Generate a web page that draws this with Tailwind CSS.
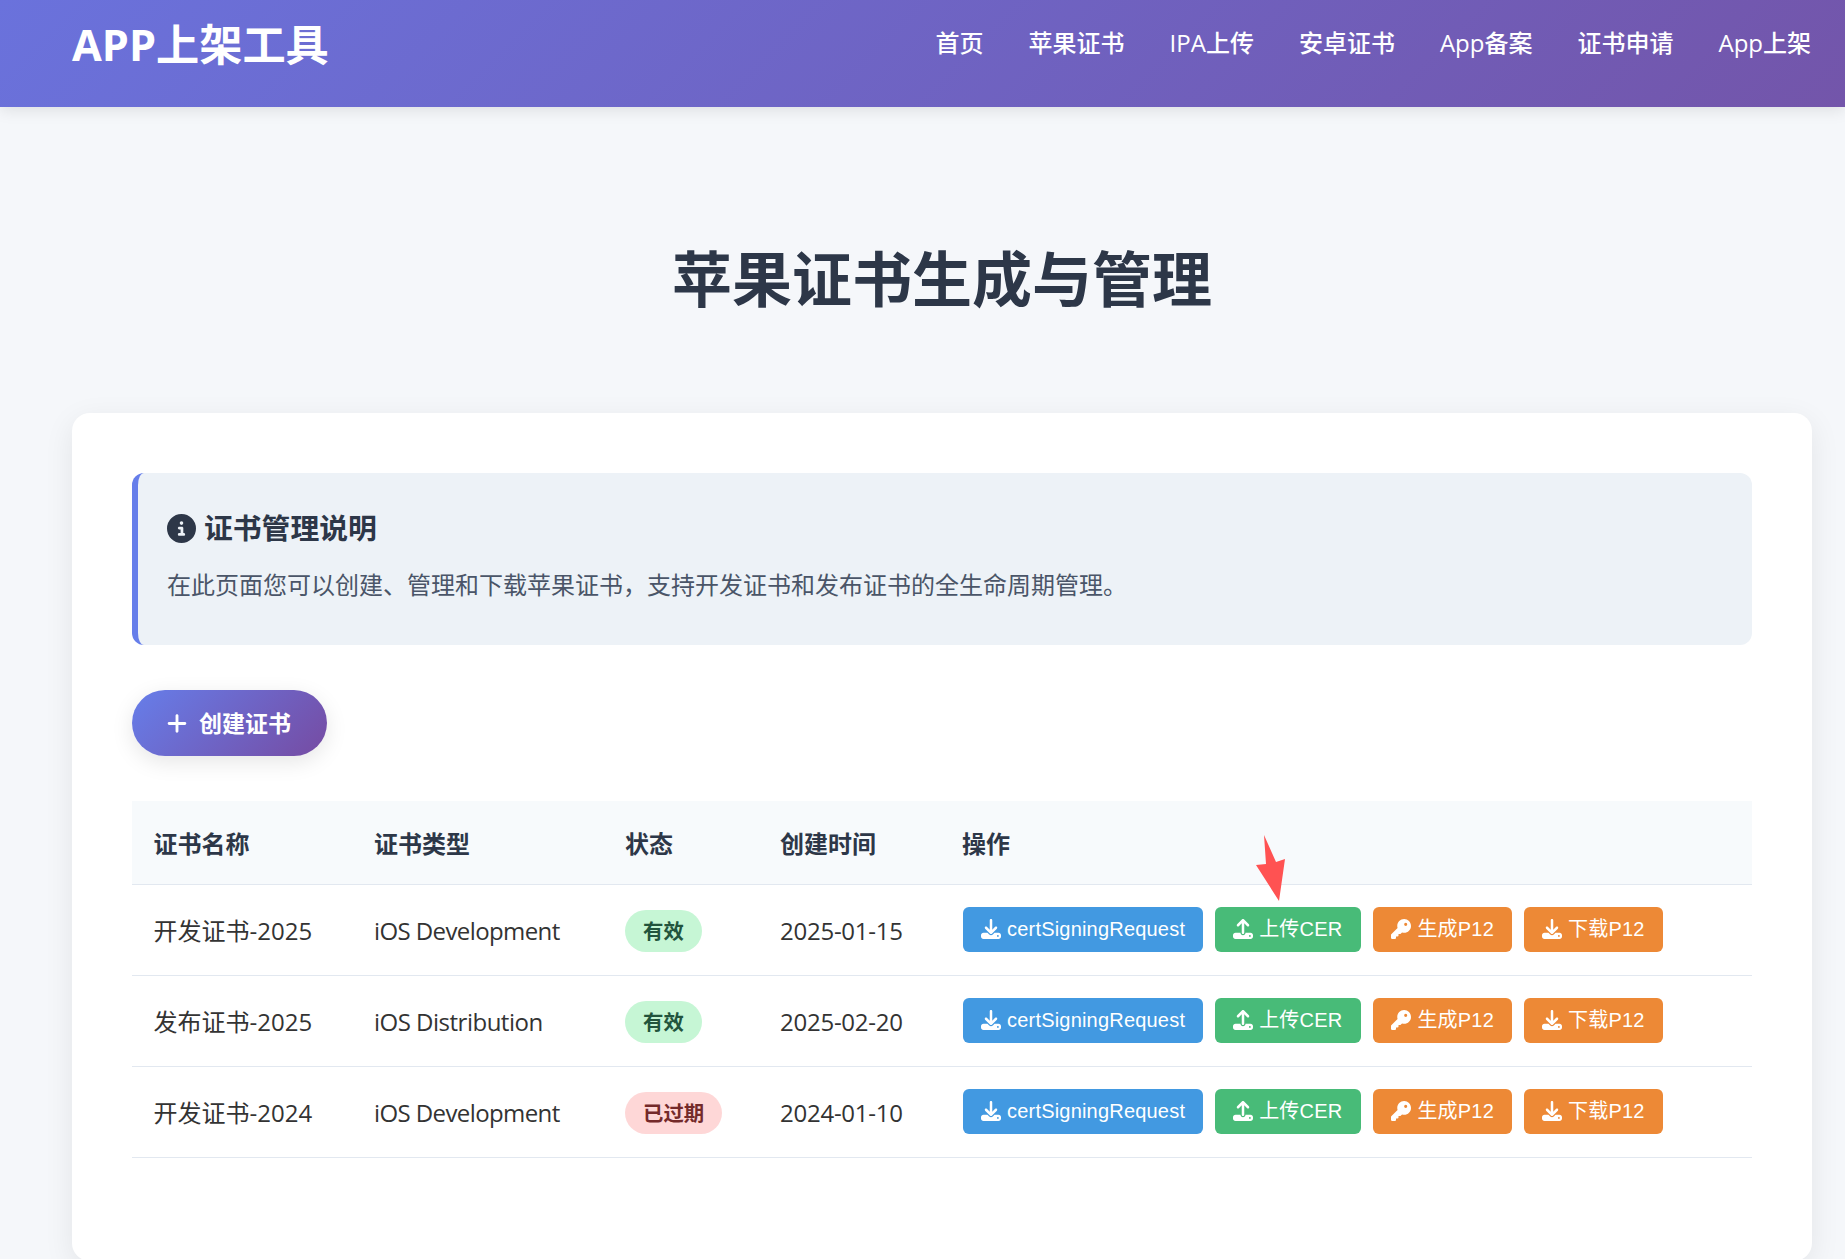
<!DOCTYPE html>
<html lang="zh-CN">
<head>
<meta charset="utf-8">
<title>苹果证书生成与管理</title>
<script src="https://cdn.jsdelivr.net/npm/@tailwindcss/browser@4"></script>
</head>
<body class="h-screen overflow-hidden bg-[#f5f7fa] text-[#333333] font-['Open_Sans','Noto_Sans_CJK_SC',sans-serif]">
<header class="h-[107px] pl-[72px] pr-[33px] bg-[linear-gradient(135deg,#6a72dc,#7355aa)] shadow-[0_3px_15px_rgba(0,0,0,0.1)] text-white relative">
  <div class="h-[86px] flex items-center justify-between">
    <a class="mt-[4px] text-[43.2px] font-bold">APP上架工具</a>
    <nav class="flex gap-[45px] mr-[1px] text-[24px] font-medium">
      <a>首页</a><a>苹果证书</a><a>IPA上传</a><a>安卓证书</a><a>App备案</a><a>证书申请</a><a>App上架</a>
    </nav>
  </div>
</header>
<main class="pl-[72px] pr-[33px]">
  <h1 class="mt-[127px] mb-[89px] h-[90px] leading-[90px] text-center text-[60px] font-bold text-[#2d3748]">苹果证书生成与管理</h1>
  <section class="relative h-[848px] p-[60px] bg-white rounded-[18px] shadow-[0_8px_30px_rgba(0,0,0,0.08)]">
    <div class="h-[172px] pl-[29px] pt-[31px] bg-[#edf2f7] border-l-[6px] border-[#667eea] rounded-[12px]">
      <h3 class="h-[48px] flex items-center gap-[8px] text-[28.8px] font-bold text-[#2d3748]">
        <svg class="w-[29px] h-[29px]" viewBox="0 0 512 512" fill="currentColor"><path d="M256 512A256 256 0 1 0 256 0a256 256 0 1 0 0 512zM216 336h24V272H216c-13.3 0-24-10.7-24-24s10.7-24 24-24h48c13.3 0 24 10.7 24 24v88h8c13.3 0 24 10.7 24 24s-10.7 24-24 24H216c-13.3 0-24-10.7-24-24s10.7-24 24-24zm40-208a32 32 0 1 1 0 64 32 32 0 1 1 0-64z"/></svg>
        证书管理说明
      </h3>
      <p class="mt-[13px] text-[24px] leading-[40px] text-[#4a5568]">在此页面您可以创建、管理和下载苹果证书，支持开发证书和发布证书的全生命周期管理。</p>
    </div>
    <button class="mt-[45px] h-[66px] w-[195px] pl-[35px] flex items-center gap-[12px] rounded-full text-white text-[23px] font-bold bg-[linear-gradient(135deg,#667eea,#764ba2)] shadow-[0_6px_22px_rgba(0,0,0,0.1)]">
      <svg class="w-[20px] h-[23px]" viewBox="0 0 448 512" fill="currentColor"><path d="M256 80c0-17.7-14.3-32-32-32s-32 14.3-32 32V224H48c-17.7 0-32 14.3-32 32s14.3 32 32 32H192V432c0 17.7 14.3 32 32 32s32-14.3 32-32V288H400c17.7 0 32-14.3 32-32s-14.3-32-32-32H256V80z"/></svg>
      创建证书
    </button>
    <table class="mt-[45px] w-full table-fixed border-separate border-spacing-0 text-left text-[24px]">
      <colgroup>
        <col class="w-[220.5px]"><col class="w-[250px]"><col class="w-[156px]"><col class="w-[182px]"><col>
      </colgroup>
      <thead>
        <tr class="h-[84px] bg-[#f7fafc] text-[#2d3748]">
          <th class="pl-[21.5px] pt-[2px] border-b border-[#e2e8f0]">证书名称</th>
          <th class="pl-[21.5px] pt-[2px] border-b border-[#e2e8f0]">证书类型</th>
          <th class="pl-[22.5px] pt-[2px] border-b border-[#e2e8f0]">状态</th>
          <th class="pl-[21.5px] pt-[2px] border-b border-[#e2e8f0]">创建时间</th>
          <th class="pl-[21.5px] pt-[2px] border-b border-[#e2e8f0]">操作</th>
        </tr>
      </thead>
      <tbody>
        <tr class="h-[91px]">
          <td class="pl-[21.5px] pt-[2px] border-b border-[#e2e8f0]">开发证书-2025</td>
          <td class="pl-[21.5px] pt-[2px] border-b border-[#e2e8f0] tracking-[-0.6px]">iOS Development</td>
          <td class="pl-[22.5px] pt-[2px] border-b border-[#e2e8f0]"><span class="inline-flex items-center h-[42px] px-[18px] rounded-full bg-[#c6f6d5] text-[#22543d] text-[20.4px] font-bold">有效</span></td>
          <td class="pl-[21.5px] pt-[2px] border-b border-[#e2e8f0] tracking-[-0.25px]">2025-01-15</td>
          <td class="pl-[22.5px] border-b border-[#e2e8f0]">
            <div class="flex gap-[12px] -mt-[2px] text-white text-[20px] tracking-[0.2px] font-['Liberation_Sans','Noto_Sans_CJK_SC',sans-serif]">
              <a class="h-[45px] px-[18px] flex items-center gap-[6px] rounded-[6px] bg-[#4299e1]"><svg class="w-[20px] h-[20px]" viewBox="0 0 512 512" fill="currentColor"><path d="M288 32c0-17.7-14.3-32-32-32s-32 14.3-32 32V274.7l-73.4-73.4c-12.5-12.5-32.8-12.5-45.3 0s-12.5 32.8 0 45.3l128 128c12.5 12.5 32.8 12.5 45.3 0l128-128c12.5-12.5 12.5-32.8 0-45.3s-32.8-12.5-45.3 0L288 274.7V32zM64 352c-35.3 0-64 28.7-64 64v32c0 35.3 28.7 64 64 64H448c35.3 0 64-28.7 64-64V416c0-35.3-28.7-64-64-64H346.5l-45.3 45.3c-25 25-65.5 25-90.5 0L165.5 352H64zm368 56a24 24 0 1 1 0 48 24 24 0 1 1 0-48z"/></svg>certSigningRequest</a>
              <a class="h-[45px] pl-[18px] pr-[19px] flex items-center gap-[6px] rounded-[6px] bg-[#48bb78]"><svg class="w-[20px] h-[20px]" viewBox="0 0 512 512" fill="currentColor"><path d="M288 109.3V352c0 17.7-14.3 32-32 32s-32-14.3-32-32V109.3l-73.4 73.4c-12.5 12.5-32.8 12.5-45.3 0s-12.5-32.8 0-45.3l128-128c12.5-12.5 32.8-12.5 45.3 0l128 128c12.5 12.5 12.5 32.8 0 45.3s-32.8 12.5-45.3 0L288 109.3zM64 352H192c0 35.3 28.7 64 64 64s64-28.7 64-64H448c35.3 0 64 28.7 64 64v32c0 35.3-28.7 64-64 64H64c-35.3 0-64-28.7-64-64V416c0-35.3 28.7-64 64-64zM432 456a24 24 0 1 0 0-48 24 24 0 1 0 0 48z"/></svg>上传CER</a>
              <a class="h-[45px] px-[18px] flex items-center gap-[6px] rounded-[6px] bg-[#ed8936]"><svg class="w-[20px] h-[20px]" viewBox="0 0 512 512" fill="currentColor"><path d="M336 352c97.2 0 176-78.8 176-176S433.2 0 336 0S160 78.8 160 176c0 18.7 2.9 36.8 8.3 53.7L7 391c-4.5 4.5-7 10.6-7 17v80c0 13.3 10.7 24 24 24h80c13.3 0 24-10.7 24-24V448h40c13.3 0 24-10.7 24-24V384h40c6.4 0 12.5-2.5 17-7l33.3-33.3c16.9 5.4 35 8.3 53.7 8.3zM376 96a40 40 0 1 1 0 80 40 40 0 1 1 0-80z"/></svg>生成P12</a>
              <a class="h-[45px] px-[18px] flex items-center gap-[6px] rounded-[6px] bg-[#ed8936]"><svg class="w-[20px] h-[20px]" viewBox="0 0 512 512" fill="currentColor"><path d="M288 32c0-17.7-14.3-32-32-32s-32 14.3-32 32V274.7l-73.4-73.4c-12.5-12.5-32.8-12.5-45.3 0s-12.5 32.8 0 45.3l128 128c12.5 12.5 32.8 12.5 45.3 0l128-128c12.5-12.5 12.5-32.8 0-45.3s-32.8-12.5-45.3 0L288 274.7V32zM64 352c-35.3 0-64 28.7-64 64v32c0 35.3 28.7 64 64 64H448c35.3 0 64-28.7 64-64V416c0-35.3-28.7-64-64-64H346.5l-45.3 45.3c-25 25-65.5 25-90.5 0L165.5 352H64zm368 56a24 24 0 1 1 0 48 24 24 0 1 1 0-48z"/></svg>下载P12</a>
            </div>
          </td>
        </tr>
        <tr class="h-[91px]">
          <td class="pl-[21.5px] pt-[2px] border-b border-[#e2e8f0]">发布证书-2025</td>
          <td class="pl-[21.5px] pt-[2px] border-b border-[#e2e8f0] tracking-[-0.5px]">iOS Distribution</td>
          <td class="pl-[22.5px] pt-[2px] border-b border-[#e2e8f0]"><span class="inline-flex items-center h-[42px] px-[18px] rounded-full bg-[#c6f6d5] text-[#22543d] text-[20.4px] font-bold">有效</span></td>
          <td class="pl-[21.5px] pt-[2px] border-b border-[#e2e8f0] tracking-[-0.25px]">2025-02-20</td>
          <td class="pl-[22.5px] border-b border-[#e2e8f0]">
            <div class="flex gap-[12px] -mt-[2px] text-white text-[20px] tracking-[0.2px] font-['Liberation_Sans','Noto_Sans_CJK_SC',sans-serif]">
              <a class="h-[45px] px-[18px] flex items-center gap-[6px] rounded-[6px] bg-[#4299e1]"><svg class="w-[20px] h-[20px]" viewBox="0 0 512 512" fill="currentColor"><path d="M288 32c0-17.7-14.3-32-32-32s-32 14.3-32 32V274.7l-73.4-73.4c-12.5-12.5-32.8-12.5-45.3 0s-12.5 32.8 0 45.3l128 128c12.5 12.5 32.8 12.5 45.3 0l128-128c12.5-12.5 12.5-32.8 0-45.3s-32.8-12.5-45.3 0L288 274.7V32zM64 352c-35.3 0-64 28.7-64 64v32c0 35.3 28.7 64 64 64H448c35.3 0 64-28.7 64-64V416c0-35.3-28.7-64-64-64H346.5l-45.3 45.3c-25 25-65.5 25-90.5 0L165.5 352H64zm368 56a24 24 0 1 1 0 48 24 24 0 1 1 0-48z"/></svg>certSigningRequest</a>
              <a class="h-[45px] pl-[18px] pr-[19px] flex items-center gap-[6px] rounded-[6px] bg-[#48bb78]"><svg class="w-[20px] h-[20px]" viewBox="0 0 512 512" fill="currentColor"><path d="M288 109.3V352c0 17.7-14.3 32-32 32s-32-14.3-32-32V109.3l-73.4 73.4c-12.5 12.5-32.8 12.5-45.3 0s-12.5-32.8 0-45.3l128-128c12.5-12.5 32.8-12.5 45.3 0l128 128c12.5 12.5 12.5 32.8 0 45.3s-32.8 12.5-45.3 0L288 109.3zM64 352H192c0 35.3 28.7 64 64 64s64-28.7 64-64H448c35.3 0 64 28.7 64 64v32c0 35.3-28.7 64-64 64H64c-35.3 0-64-28.7-64-64V416c0-35.3 28.7-64 64-64zM432 456a24 24 0 1 0 0-48 24 24 0 1 0 0 48z"/></svg>上传CER</a>
              <a class="h-[45px] px-[18px] flex items-center gap-[6px] rounded-[6px] bg-[#ed8936]"><svg class="w-[20px] h-[20px]" viewBox="0 0 512 512" fill="currentColor"><path d="M336 352c97.2 0 176-78.8 176-176S433.2 0 336 0S160 78.8 160 176c0 18.7 2.9 36.8 8.3 53.7L7 391c-4.5 4.5-7 10.6-7 17v80c0 13.3 10.7 24 24 24h80c13.3 0 24-10.7 24-24V448h40c13.3 0 24-10.7 24-24V384h40c6.4 0 12.5-2.5 17-7l33.3-33.3c16.9 5.4 35 8.3 53.7 8.3zM376 96a40 40 0 1 1 0 80 40 40 0 1 1 0-80z"/></svg>生成P12</a>
              <a class="h-[45px] px-[18px] flex items-center gap-[6px] rounded-[6px] bg-[#ed8936]"><svg class="w-[20px] h-[20px]" viewBox="0 0 512 512" fill="currentColor"><path d="M288 32c0-17.7-14.3-32-32-32s-32 14.3-32 32V274.7l-73.4-73.4c-12.5-12.5-32.8-12.5-45.3 0s-12.5 32.8 0 45.3l128 128c12.5 12.5 32.8 12.5 45.3 0l128-128c12.5-12.5 12.5-32.8 0-45.3s-32.8-12.5-45.3 0L288 274.7V32zM64 352c-35.3 0-64 28.7-64 64v32c0 35.3 28.7 64 64 64H448c35.3 0 64-28.7 64-64V416c0-35.3-28.7-64-64-64H346.5l-45.3 45.3c-25 25-65.5 25-90.5 0L165.5 352H64zm368 56a24 24 0 1 1 0 48 24 24 0 1 1 0-48z"/></svg>下载P12</a>
            </div>
          </td>
        </tr>
        <tr class="h-[91px]">
          <td class="pl-[21.5px] pt-[2px] border-b border-[#e2e8f0]">开发证书-2024</td>
          <td class="pl-[21.5px] pt-[2px] border-b border-[#e2e8f0] tracking-[-0.6px]">iOS Development</td>
          <td class="pl-[22.5px] pt-[2px] border-b border-[#e2e8f0]"><span class="inline-flex items-center h-[42px] px-[18px] rounded-full bg-[#fed7d7] text-[#742a2a] text-[20.4px] font-bold">已过期</span></td>
          <td class="pl-[21.5px] pt-[2px] border-b border-[#e2e8f0] tracking-[-0.25px]">2024-01-10</td>
          <td class="pl-[22.5px] border-b border-[#e2e8f0]">
            <div class="flex gap-[12px] -mt-[2px] text-white text-[20px] tracking-[0.2px] font-['Liberation_Sans','Noto_Sans_CJK_SC',sans-serif]">
              <a class="h-[45px] px-[18px] flex items-center gap-[6px] rounded-[6px] bg-[#4299e1]"><svg class="w-[20px] h-[20px]" viewBox="0 0 512 512" fill="currentColor"><path d="M288 32c0-17.7-14.3-32-32-32s-32 14.3-32 32V274.7l-73.4-73.4c-12.5-12.5-32.8-12.5-45.3 0s-12.5 32.8 0 45.3l128 128c12.5 12.5 32.8 12.5 45.3 0l128-128c12.5-12.5 12.5-32.8 0-45.3s-32.8-12.5-45.3 0L288 274.7V32zM64 352c-35.3 0-64 28.7-64 64v32c0 35.3 28.7 64 64 64H448c35.3 0 64-28.7 64-64V416c0-35.3-28.7-64-64-64H346.5l-45.3 45.3c-25 25-65.5 25-90.5 0L165.5 352H64zm368 56a24 24 0 1 1 0 48 24 24 0 1 1 0-48z"/></svg>certSigningRequest</a>
              <a class="h-[45px] pl-[18px] pr-[19px] flex items-center gap-[6px] rounded-[6px] bg-[#48bb78]"><svg class="w-[20px] h-[20px]" viewBox="0 0 512 512" fill="currentColor"><path d="M288 109.3V352c0 17.7-14.3 32-32 32s-32-14.3-32-32V109.3l-73.4 73.4c-12.5 12.5-32.8 12.5-45.3 0s-12.5-32.8 0-45.3l128-128c12.5-12.5 32.8-12.5 45.3 0l128 128c12.5 12.5 12.5 32.8 0 45.3s-32.8 12.5-45.3 0L288 109.3zM64 352H192c0 35.3 28.7 64 64 64s64-28.7 64-64H448c35.3 0 64 28.7 64 64v32c0 35.3-28.7 64-64 64H64c-35.3 0-64-28.7-64-64V416c0-35.3 28.7-64 64-64zM432 456a24 24 0 1 0 0-48 24 24 0 1 0 0 48z"/></svg>上传CER</a>
              <a class="h-[45px] px-[18px] flex items-center gap-[6px] rounded-[6px] bg-[#ed8936]"><svg class="w-[20px] h-[20px]" viewBox="0 0 512 512" fill="currentColor"><path d="M336 352c97.2 0 176-78.8 176-176S433.2 0 336 0S160 78.8 160 176c0 18.7 2.9 36.8 8.3 53.7L7 391c-4.5 4.5-7 10.6-7 17v80c0 13.3 10.7 24 24 24h80c13.3 0 24-10.7 24-24V448h40c13.3 0 24-10.7 24-24V384h40c6.4 0 12.5-2.5 17-7l33.3-33.3c16.9 5.4 35 8.3 53.7 8.3zM376 96a40 40 0 1 1 0 80 40 40 0 1 1 0-80z"/></svg>生成P12</a>
              <a class="h-[45px] px-[18px] flex items-center gap-[6px] rounded-[6px] bg-[#ed8936]"><svg class="w-[20px] h-[20px]" viewBox="0 0 512 512" fill="currentColor"><path d="M288 32c0-17.7-14.3-32-32-32s-32 14.3-32 32V274.7l-73.4-73.4c-12.5-12.5-32.8-12.5-45.3 0s-12.5 32.8 0 45.3l128 128c12.5 12.5 32.8 12.5 45.3 0l128-128c12.5-12.5 12.5-32.8 0-45.3s-32.8-12.5-45.3 0L288 274.7V32zM64 352c-35.3 0-64 28.7-64 64v32c0 35.3 28.7 64 64 64H448c35.3 0 64-28.7 64-64V416c0-35.3-28.7-64-64-64H346.5l-45.3 45.3c-25 25-65.5 25-90.5 0L165.5 352H64zm368 56a24 24 0 1 1 0 48 24 24 0 1 1 0-48z"/></svg>下载P12</a>
            </div>
          </td>
        </tr>
      </tbody>
    </table>
    <svg class="absolute left-[1184px] top-[422px] w-[30px] h-[66px]" viewBox="1256 835 30 66" fill="#ff5252"><path d="M1264 835L1276 862L1285 859L1279 901L1256 865L1266 864Z"/></svg>
  </section>
</main>
</body>
</html>
